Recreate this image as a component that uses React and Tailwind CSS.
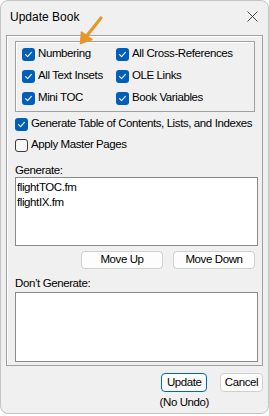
import React from "react";

const Check = ({ checked }) =>
  checked ? (
    <span className="w-[13px] h-[13px] rounded-[3px] bg-[#005fb8] flex items-center justify-center shrink-0">
      <svg width="9" height="9" viewBox="0 0 9 9" fill="none">
        <path d="M1.6 4.7 L3.6 6.6 L7.4 2.4" stroke="white" strokeWidth="1.1" strokeLinecap="round" strokeLinejoin="round" />
      </svg>
    </span>
  ) : (
    <span className="w-[13px] h-[13px] rounded-[3px] border border-[#3a3a3a] bg-[#f7f7f7] shrink-0" />
  );

const CheckItem = ({ label, checked = true, className = "" }) => (
  <div className={`flex items-center gap-[3px] ${className}`}>
    <Check checked={checked} />
    <span>{label}</span>
  </div>
);

const Button = ({ children, className = "" }) => (
  <button className={`h-[18px] rounded-[4px] border border-[#d0d0d0] bg-[#fdfdfd] text-[11.5px] leading-none text-black flex items-center justify-center ${className}`}>
    {children}
  </button>
);

export default function App() {
  return (
    <div className="w-[269px] h-[416px] bg-white" style={{ fontFamily: '"Liberation Sans", Arial, sans-serif' }}>
      <div className="relative w-[269px] h-[414px] rounded-[8px] border border-[#c4c4c4] bg-[#f0f0f0] text-[11.5px] tracking-[-0.4px] text-black overflow-hidden">
        {/* title bar */}
        <div className="h-[34px] flex items-center justify-between pl-[9px] pr-[10px]">
          <span className="text-[12px] tracking-normal mt-[-2px]">Update Book</span>
          <svg width="11" height="11" viewBox="0 0 11 11" className="mt-[-4px]">
            <path d="M0.5 0.5 L10.5 10.5 M10.5 0.5 L0.5 10.5" stroke="#333" strokeWidth="0.9" />
          </svg>
        </div>

        {/* outer frame */}
        <div className="ml-[5px] w-[257px] h-[331px] border border-[#a0a0a0] shadow-[inset_1px_1px_0_#ffffff] flex flex-col">
          {/* group box */}
          <div className="ml-[8px] mt-[5px] w-[240px] h-[71px] border border-[#a0a0a0] shadow-[inset_1px_1px_0_#ffffff] pl-[6px] pt-[1px] flex flex-col">
            <div className="h-[22px] flex items-center">
              <CheckItem label="Numbering" className="w-[94px]" />
              <CheckItem label="All Cross-References" />
            </div>
            <div className="h-[22px] flex items-center">
              <CheckItem label="All Text Insets" className="w-[94px]" />
              <CheckItem label="OLE Links" />
            </div>
            <div className="h-[22px] flex items-center">
              <CheckItem label="Mini TOC" className="w-[94px]" />
              <CheckItem label="Book Variables" />
            </div>
          </div>

          <CheckItem label="Generate Table of Contents, Lists, and Indexes" className="ml-[8px] mt-[2px] h-[20px]" />
          <CheckItem label="Apply Master Pages" checked={false} className="ml-[8px] mt-[1px] h-[20px]" />

          <div className="ml-[8px] mt-[8px] leading-[14px]">Generate:</div>
          <div className="ml-[8px] w-[243px] h-[69px] border border-[#8a8a8a] bg-white pt-[2px] pl-[1px] leading-[15px] shrink-0">
            <div>flightTOC.fm</div>
            <div>flightIX.fm</div>
          </div>

          <div className="mt-[5px] flex justify-end gap-[10px] pr-[7px]">
            <Button className="w-[82px]">Move Up</Button>
            <Button className="w-[82px]">Move Down</Button>
          </div>

          <div className="ml-[8px] mt-[7px] leading-[14px]">Don’t Generate:</div>
          <div className="ml-[8px] mt-[2px] w-[243px] h-[70px] border border-[#8a8a8a] bg-white shrink-0" />
        </div>

        {/* footer */}
        <div className="mt-[7px] flex justify-end items-start gap-[11px] pr-[5px]">
          <div className="flex flex-col items-center">
            <button className="w-[46px] h-[19px] rounded-[4px] border border-[#0067c0] bg-[#fdfdfd] text-[11.5px] leading-none flex items-center justify-center">
              Update
            </button>
            <span className="mt-[3px] leading-[14px]">(No Undo)</span>
          </div>
          <Button className="w-[43px] h-[19px]">Cancel</Button>
        </div>

        {/* callout arrow */}
        <svg className="absolute left-[74px] top-[14px]" width="32" height="32" viewBox="0 0 32 32">
          <path d="M26 3 L10 23" stroke="#e8952b" strokeWidth="3.2" strokeLinecap="round" />
          <path d="M5.5 28.5 L6.5 17 L17 24.5 Z" fill="#e8952b" stroke="#e8952b" strokeWidth="1.5" strokeLinejoin="round" />
        </svg>
      </div>
    </div>
  );
}
